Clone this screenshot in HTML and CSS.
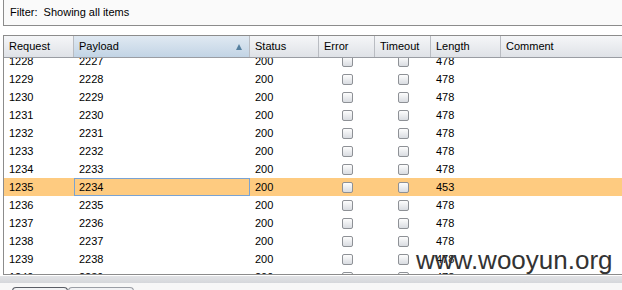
FILE: index.html
```html
<!DOCTYPE html>
<html lang="en">
<head>
  <meta charset="UTF-8" />
  <title>Intruder results</title>
  <link rel="stylesheet" href="styles.css">
</head>
<body>

  <!-- Filter bar -->
  <div class="filter">Filter:&nbsp; Showing all items</div>

  <!-- Results table -->
  <div class="results">
    <div class="head">
      <div class="th">Request</div>
      <div class="th sorted">Payload<span class="arrow"></span></div>
      <div class="th">Status</div>
      <div class="th">Error</div>
      <div class="th">Timeout</div>
      <div class="th">Length</div>
      <div class="th">Comment</div>
    </div>
    <div class="viewport">
      <div class="rows" id="rows"></div>
    </div>
  </div>

  <div class="band"></div>

  <div class="tabs">
    <span class="tab active"></span>
    <span class="tab"></span>
  </div>

  <div class="watermark">www.wooyun.org</div>

  <script>
    let data = [
      [1228, 2227, 200, 478],
      [1229, 2228, 200, 478],
      [1230, 2229, 200, 478],
      [1231, 2230, 200, 478],
      [1232, 2231, 200, 478],
      [1233, 2232, 200, 478],
      [1234, 2233, 200, 478],
      [1235, 2234, 200, 453],
      [1236, 2235, 200, 478],
      [1237, 2236, 200, 478],
      [1238, 2237, 200, 478],
      [1239, 2238, 200, 478],
      [1240, 2239, 200, 478]
    ]
    let con = document.getElementById("rows")
    data.forEach((item) => {
      let row = document.createElement("div")
      row.className = item[0] == 1235 ? "row selected" : "row"
      row.innerHTML = `
        <div class="td">${item[0]}</div>
        <div class="td payload">${item[1]}</div>
        <div class="td">${item[2]}</div>
        <div class="td check"><span class="box"></span></div>
        <div class="td check"><span class="box"></span></div>
        <div class="td">${item[3]}</div>
        <div class="td"></div>
      `;
      con.append(row)
    })
  </script>
</body>
</html>
```

FILE: styles.css
```css
body {
  margin: 0;
  font-family: "Liberation Sans", Arial, sans-serif;
  font-size: 11px;
  color: #000;
  background: #fff;
  height: 290px;
  overflow: hidden;
  position: relative;
}

.filter {
  margin-left: 3px;
  height: 25px;
  line-height: 25px;
  padding-left: 6px;
  background: #fafafa;
  border-left: 1px solid #8c8c8c;
  border-bottom: 1px solid #8c8c8c;
}

.results {
  margin: 9px 0 0 3px;
  border-top: 1px solid #8c8c8c;
  border-left: 1px solid #8c8c8c;
  border-bottom: 1px solid #8c8c8c;
}

.head,
.row {
  display: grid;
  grid-template-columns: 70px 176px 69px 56px 56px 70px 1fr;
}

.head {
  height: 21px;
  border-bottom: 1px solid #9a9da3;
  background: linear-gradient(#f5f6f8, #dfe2e7);
}

.th {
  position: relative;
  line-height: 20px;
  padding-left: 5px;
  border-right: 1px solid #b9bcc2;
}

.th:last-child {
  border-right: none;
}

.th.sorted {
  background: linear-gradient(#e0e9f2, #c2d4e5);
}

.arrow {
  position: absolute;
  right: 7px;
  top: 8px;
  width: 0;
  height: 0;
  border-left: 3px solid transparent;
  border-right: 3px solid transparent;
  border-bottom: 6px solid #55809f;
}

.viewport {
  height: 216px;
  overflow: hidden;
  background: #fff;
}

.rows {
  margin-top: -6px;
}

.row {
  height: 18px;
}

.row.selected {
  background: #fecb80;
}

.td {
  line-height: 18px;
  padding-left: 5px;
  white-space: nowrap;
}

.row.selected .payload {
  box-shadow: inset 0 0 0 1px #7aa3d2;
}

.td.check {
  display: flex;
  align-items: center;
  justify-content: center;
  padding: 1px 0 0 0;
}

.box {
  box-sizing: border-box;
  width: 11px;
  height: 11px;
  border: 1px solid #8e9196;
  border-radius: 2px;
  background: linear-gradient(#fdfdfd, #d9dce1);
}

.band {
  height: 7px;
  margin-top: 1px;
  background: linear-gradient(#e2e3e6, #d5d7db);
}

.tabs {
  display: flex;
  padding: 4px 0 0 12px;
  background: #f7f7f7;
  height: 10px;
}

.tab {
  width: 54px;
  height: 14px;
  border: 1px solid #5a5e66;
  border-bottom: none;
  border-radius: 4px 4px 0 0;
  background: #f2f3f5;
}

.tab + .tab {
  width: 64px;
  border-color: #9a9ea5;
}

.watermark {
  position: absolute;
  left: 416px;
  top: 247px;
  font-size: 26px;
  line-height: 26px;
  color: #333;
}
```
